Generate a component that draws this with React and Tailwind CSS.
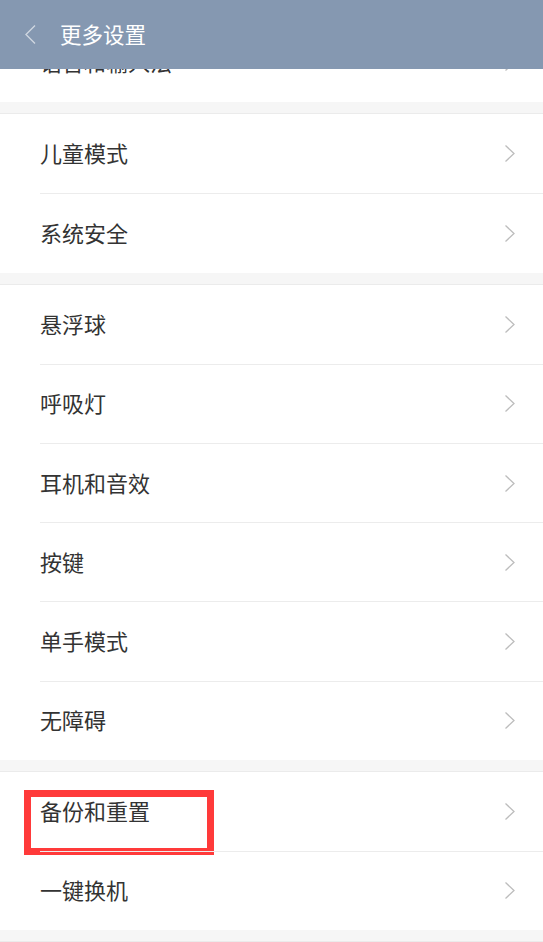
const sections = [
  ['儿童模式', '系统安全'],
  ['悬浮球', '呼吸灯', '耳机和音效', '按键', '单手模式', '无障碍'],
  ['备份和重置', '一键换机'],
]

function Arrow() {
  return (
    <svg width="12" height="19" viewBox="0 0 12 19" className="shrink-0">
      <path d="M1.5 1.5 L10 9.5 L1.5 17.5" fill="none" stroke="#bdbdbd" strokeWidth="1.3" />
    </svg>
  )
}

function Row({ label, first, marked }) {
  return (
    <div className="relative h-[79.2px] pl-10">
      <div
        className={`flex h-full items-center justify-between pr-[27px] ${first ? '' : 'border-t border-[#ececec]'}`}
      >
        <span className="mb-[3px] text-[22px] text-[#333333] leading-none">{label}</span>
        <Arrow />
      </div>
      {marked && (
        <div className="absolute left-6 top-[18px] w-[190px] h-[65px] border-[7px] border-[#ff3a3a]" />
      )}
    </div>
  )
}

function Gap() {
  return <div className="h-3 bg-[#f6f6f6] border-b border-[#ebebeb]" />
}

export default function App() {
  return (
    <div
      className="relative h-[942px] w-full overflow-hidden bg-[#f6f6f6]"
      style={{ fontFamily: '"Noto Sans CJK SC", "Noto Sans", sans-serif' }}
    >
      <div className="absolute inset-x-0 top-0 z-10 flex h-[69px] items-center bg-[#8598b1]">
        <svg width="13" height="21" viewBox="0 0 13 21" className="ml-[24px]">
          <path d="M11 1.5 L2 10.5 L11 19.5" fill="none" stroke="rgba(255,255,255,0.6)" strokeWidth="1.4" />
        </svg>
        <span className="ml-[23px] text-[21.5px] text-white">更多设置</span>
      </div>

      <div className="pt-[23px]">
        <div className="bg-white">
          <Row label="语言和输入法" first />
        </div>
        {sections.map((rows, i) => (
          <div key={i}>
            <Gap />
            <div className="bg-white">
              {rows.map((r, j) => (
                <Row key={r} label={r} first={j === 0} marked={r === '备份和重置'} />
              ))}
            </div>
          </div>
        ))}
        <Gap />
      </div>
    </div>
  )
}
